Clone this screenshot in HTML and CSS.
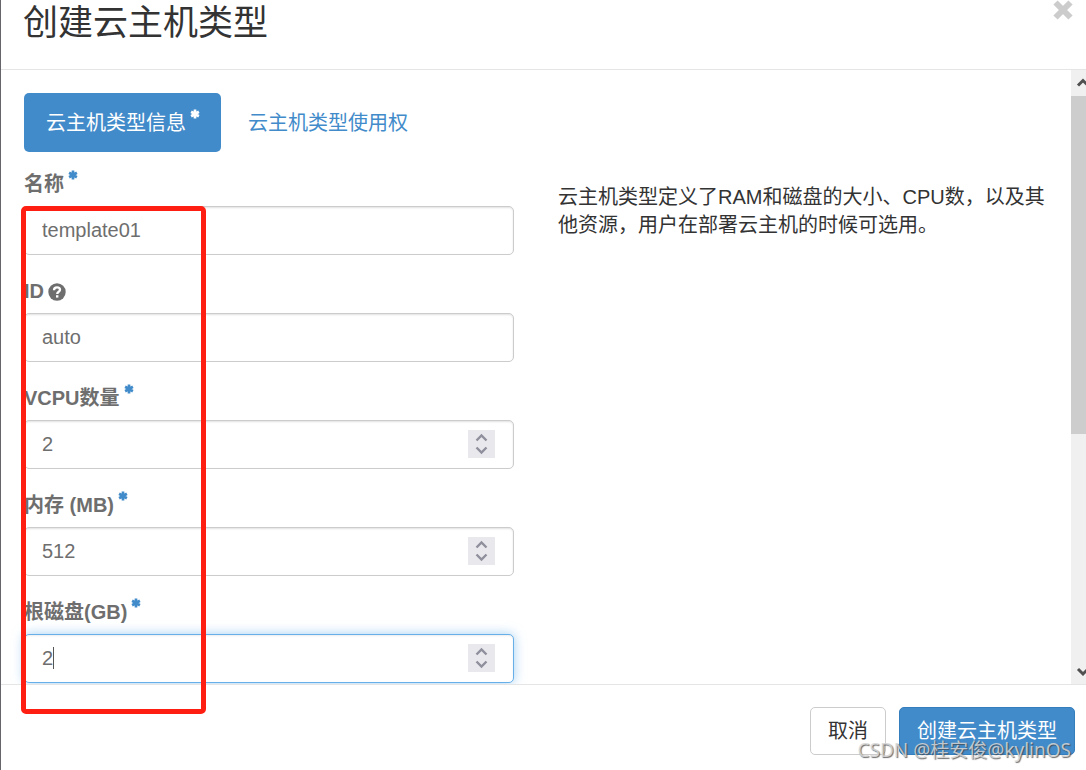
FILE: index.html
```
<!DOCTYPE html>
<html lang="zh-CN">
<head>
<meta charset="utf-8">
<title>创建云主机类型</title>
<link rel="stylesheet" href="styles.css">
</head>
<body>

<svg class="sprite" aria-hidden="true">
  <symbol id="asterisk" viewBox="0 0 10 10">
    <path d="M5 .4V9.6M1.1 2.8L8.9 7.2M8.9 2.8L1.1 7.2" fill="none" stroke="currentColor" stroke-width="2.7"/>
  </symbol>
  <symbol id="spin" viewBox="0 0 27 28">
    <path d="M8.5 10.5L13.5 5.5L18.5 10.5M8.5 17.5L13.5 22.5L18.5 17.5" fill="none" stroke="#8f8f9d" stroke-width="2.4"/>
  </symbol>
</svg>

<div class="modal">
  <div class="modal-header">
    <h3>创建云主机类型</h3>
    <button type="button" class="close" aria-label="关闭">
      <svg viewBox="0 0 20 20" width="20" height="20"><path d="M2.5 2.5L17.5 17.5M17.5 2.5L2.5 17.5" stroke="#ccc" stroke-width="6"/></svg>
    </button>
  </div>

  <div class="modal-main">
    <form class="modal-body" id="flavor">
      <nav class="nav-pills">
        <a href="#info" class="active">云主机类型信息<svg class="required"><use href="#asterisk"/></svg></a>
        <a href="#access">云主机类型使用权</a>
      </nav>
      <div class="row">
        <div class="fields">
          <div class="form-group">
            <label for="name">名称<svg class="required"><use href="#asterisk"/></svg></label>
            <input type="text" id="name" class="form-control" value="template01">
          </div>
          <div class="form-group">
            <label for="id">ID<svg class="help" viewBox="0 0 18 18"><circle cx="9" cy="9" r="8.7" fill="currentColor"/><path d="M6 7.2C6 5.2 7.3 4.3 9 4.3S12 5.3 12 6.8C12 8.8 9.2 8.7 9.2 11" fill="none" stroke="#fff" stroke-width="2.3"/><path d="M8 12.2h2.4v2.4H8z" fill="#fff"/></svg></label>
            <input type="text" id="id" class="form-control" value="auto">
          </div>
          <div class="form-group">
            <label for="vcpus">VCPU数量<svg class="required"><use href="#asterisk"/></svg></label>
            <div class="number">
              <input type="number" id="vcpus" class="form-control" value="2">
              <svg class="spin"><use href="#spin"/></svg>
            </div>
          </div>
          <div class="form-group">
            <label for="ram">内存 (MB)<svg class="required"><use href="#asterisk"/></svg></label>
            <div class="number">
              <input type="number" id="ram" class="form-control" value="512">
              <svg class="spin"><use href="#spin"/></svg>
            </div>
          </div>
          <div class="form-group">
            <label for="disk">根磁盘(GB)<svg class="required"><use href="#asterisk"/></svg></label>
            <div class="number">
              <input type="number" id="disk" class="form-control focused" value="2">
              <span class="caret"></span>
              <svg class="spin"><use href="#spin"/></svg>
            </div>
          </div>
        </div>
        <p class="help-text">云主机类型定义了RAM和磁盘的大小、CPU数，以及其他资源，用户在部署云主机的时候可选用。</p>
      </div>
    </form>
    <div class="scrollbar" aria-hidden="true">
      <svg viewBox="0 0 15 26"><path d="M7 15.5L12 10.5L17 15.5" fill="none" stroke="#505050" stroke-width="3"/></svg>
      <div class="thumb"></div>
      <svg viewBox="0 0 15 26"><path d="M7 11L12 16L17 11" fill="none" stroke="#505050" stroke-width="3"/></svg>
    </div>
  </div>

  <div class="modal-footer">
    <button type="button" class="btn">取消</button>
    <button type="submit" form="flavor" class="btn btn-primary">创建云主机类型</button>
  </div>

  <div class="highlight"></div>
  <div class="watermark">CSDN @桂安俊@kylinOS</div>
</div>

</body>
</html>
```

FILE: styles.css
```
* {box-sizing: border-box;}
body {margin: 0; background: #fff; color: #333; font: 20px/28px "Liberation Sans", Arial, "Noto Sans CJK SC", sans-serif;}
button, input {font: inherit;}
.sprite {display: none;}

.modal {position: relative; display: flex; flex-direction: column; height: 100vh; overflow: hidden; border-left: 1px solid #66666a;}
.modal-header {display: flex; justify-content: space-between; height: 70px; padding: 0 13px 0 22px; border-bottom: 1px solid #e5e5e5;}
.modal-header h3 {margin: 0; font-size: 35px; line-height: 46px; font-weight: normal;}
.close {height: 20px; padding: 0; border: 0; background: none;}
.close svg {display: block;}

.modal-main {display: flex; flex: 1; min-height: 0;}
.modal-body {flex: 1; padding: 23px 23px 0; overflow: hidden;}
.nav-pills {display: flex; gap: 5px;}
.nav-pills a {padding: 16px 22px 15px; border-radius: 5px; color: #428bca; text-decoration: none;}
.nav-pills a.active {padding-right: 21px; background: #428bca; color: #fff;}
.required {width: 10px; height: 10px; margin-left: 4px; vertical-align: 11px;}

.row {display: grid; grid-template-columns: 1fr 1fr; gap: 44px; padding-top: 18px;}
.form-group {margin-bottom: 22px;}
.form-group label {display: block; height: 28px; margin-bottom: 8px; color: #6e6e6e; font-weight: bold;}
.form-group .required {color: #428bca;}
.help {width: 18px; height: 18px; margin-left: 4px; vertical-align: -3px;}
.form-control {display: block; width: 100%; height: 49px; padding: 0 17px; border: 1px solid #ccc; border-radius: 5px; background: #fff; color: #6e6e6e; box-shadow: inset 0 1px 2px rgba(0,0,0,.12); outline: 0; appearance: textfield;}
.form-control::-webkit-inner-spin-button {appearance: none; margin: 0;}
.form-control.focused {border-color: #66afe9; box-shadow: inset 0 1px 2px rgba(0,0,0,.08), 0 0 12px rgba(102,175,233,.6);}
.number {position: relative;}
.spin {position: absolute; top: 10px; right: 19px; width: 27px; height: 28px; background: #e9e9ed;}
.caret {position: absolute; top: 13px; left: 29px; width: 1px; height: 22px; background: #555;}
.help-text {margin: 13px 0 0;}

.scrollbar {display: flex; flex-direction: column; width: 15px; background: #f0f0f0;}
.scrollbar svg {display: block; width: 15px; height: 26px;}
.thumb {height: 55%; background: #cdcdcd;}
.scrollbar svg:last-child {margin-top: auto;}

.modal-footer {display: flex; justify-content: flex-end; gap: 13px; padding: 22px 11px 15px; border-top: 1px solid #e5e5e5;}
.btn {height: 48px; padding: 0 17px; border: 1px solid #ccc; border-radius: 5px; background: #fff; color: #333;}
.btn-primary {border-color: #357ebd; background: #428bca; color: #fff;}

.highlight {position: absolute; top: 206px; left: 20px; width: 185px; height: 508px; border: 5px solid #ff1e12; border-radius: 5px; pointer-events: none;}
.watermark {position: absolute; right: 15px; bottom: 6px; color: rgba(215,215,215,.85); font-family: "Noto Sans", "Noto Sans CJK SC", sans-serif; font-size: 19px; text-shadow: 1px 1px 1px rgba(70,70,70,.8); white-space: nowrap; pointer-events: none;}
```
